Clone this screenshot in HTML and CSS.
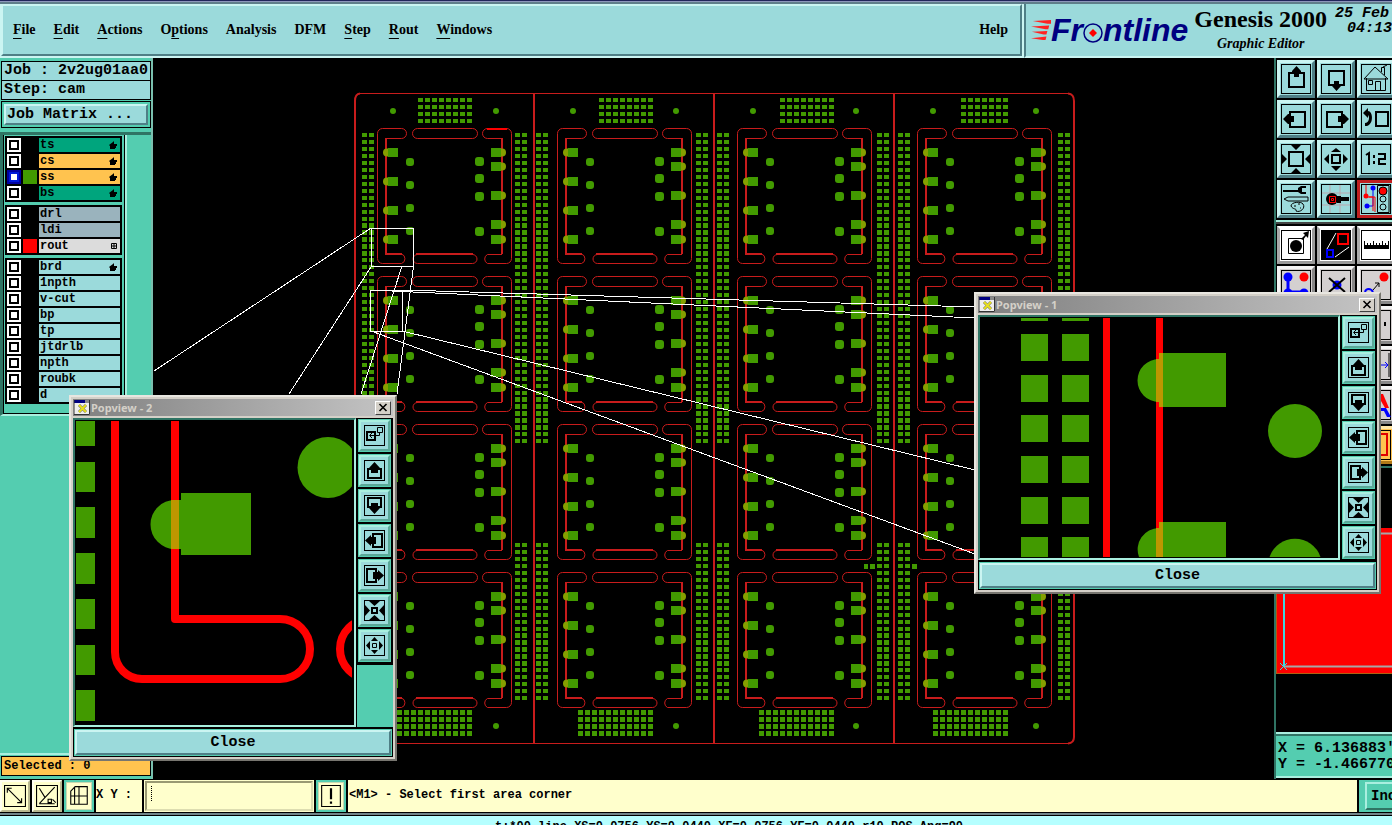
FILE: index.html
```html
<!DOCTYPE html>
<html lang="en">
<head>
<meta charset="utf-8">
<title>Genesis 2000 Graphic Editor</title>
<link rel="stylesheet" href="styles.css">
</head>
<body>
<svg class="defs" aria-hidden="true">
  <defs>
    <symbol id="hand" viewBox="0 0 8 8"><path d="M0 4 L4 1 L5 0 V3 H8 V5 H7 V7 H6 V8 H1 V5Z"/></symbol>
    <symbol id="grid4" viewBox="0 0 6 6"><path d="M0.500 .5H5.500V5.500H.5Z M3 0V6 M0 3H6" fill="none" stroke="#000"/></symbol>

    <!-- large toolbar icons -->
    <symbol id="t-up" viewBox="0 0 30 30"><path class="s2" d="M8 9H23V23H8Z"/><path d="M15.500 2L20 7V8H18V13H13V8H11V7Z"/></symbol>
    <symbol id="t-down" viewBox="0 0 30 30"><path class="s2" d="M8 7H23V21H8Z"/><path d="M15.500 27L20 22V21H18V17H13V21H11V22Z"/></symbol>
    <symbol id="t-left" viewBox="0 0 30 30"><path class="s2" d="M9 8H24V23H9Z"/><path d="M2 15L7 10H8V12H13V18H8V20H7Z"/></symbol>
    <symbol id="t-right" viewBox="0 0 30 30"><path class="s2" d="M6 8H21V23H6Z"/><path d="M28 15L23 10H22V12H17V18H22V20H23Z"/></symbol>
    <symbol id="t-home" viewBox="0 0 30 30"><path class="s1" d="M3 15L14 3L27 15M5.500 14V26.500H24.500V14M3 15H27M10 16.500H7.500V20.500H11.500V16.500H9M14.500 26V17.500H19.500V26M20.500 8V3.500H23.500V11M22 3L26 1"/></symbol>
    <symbol id="t-undo" viewBox="0 0 30 30"><path class="s2" d="M15 8H27V22H15Z"/><path d="M2 9L7 4V7C12 7 13 20 6 22H4V19C8 19 9 13 7 11V14Z"/></symbol>
    <symbol id="t-zin" viewBox="0 0 30 30"><path class="s2" d="M8 8H22V22H8Z"/><path d="M10 1H20L15 6ZM10 29H20L15 24ZM1 10V20L6 15ZM29 10V20L24 15Z"/></symbol>
    <symbol id="t-zout" viewBox="0 0 30 30"><path class="s2" d="M11 11H19V19H11Z"/><path d="M10 8H20L15 4ZM10 22H20L15 27ZM8 10V20L3 15ZM22 10V20L27 15Z"/></symbol>
    <symbol id="t-12" viewBox="0 0 30 30"><path class="s2" d="M5 11L8 9V21M13 11V14M13 17V20M17 10H24V15H18V20H25"/></symbol>
    <symbol id="t-tools" viewBox="0 0 30 30"><path d="M2 6H17V4L20 2H25V4H21V8H25V10H20L17 8H2Z"/><path class="s1" d="M3 15L7 13H27V17H7ZM10 22C10 18 20 17 22 20C25 24 19 29 15 27C16 24 12 26 10 22ZM13 22H15M17 20H19M19 24H20"/></symbol>
    <symbol id="t-pad" viewBox="0 0 30 30"><path d="M9 1V29M19 1V29M1 9H29M1 21H29" stroke="#b9a7ae"/><circle cx="11" cy="15" r="6"/><path d="M16 12H20V13H28V17H20V19H16Z"/><path d="M8.500 12.500H14.500V18.500H8.500ZM10.500 14.500H12.500V16.500H10.500Z" fill="none" stroke="red"/></symbol>
    <symbol id="t-net" viewBox="0 0 30 30"><path d="M12 4V22H6" fill="none" stroke="#00f"/><path d="M5 1V12M5 13H12V27M8 13H14V28" fill="none" stroke="red"/><circle cx="12" cy="4" r="2.500" fill="#00f"/><circle cx="6" cy="22" r="2.500" fill="#00f"/><circle cx="5" cy="12" r="2.500" fill="red"/><path class="s1" d="M16.500 1.500H28V28.500H16.500Z"/><circle cx="22" cy="7" r="4" fill="red" stroke="#000"/><circle class="s1" cx="22" cy="15" r="3"/><circle class="s1" cx="22" cy="23" r="3"/></symbol>
    <symbol id="t-sel" viewBox="0 0 30 30"><path class="s1" d="M7.500 8.500H22.500V23.500H7.500Z"/><circle cx="15" cy="16" r="6"/><path d="M20 9L24 5L22 3L28 1L27 8L25 6L22 10Z"/></symbol>
    <symbol id="t-poly" viewBox="0 0 30 30"><path d="M1 1H29V29H1Z"/><path d="M6 19L15 3M14 27L28 17" stroke="#fff"/><path d="M17 4H27V14H17Z" fill="none" stroke="red" stroke-width="2"/><path d="M6 20H12V27H6Z" fill="none" stroke="#00f" stroke-width="2"/></symbol>
    <symbol id="t-ruler" viewBox="0 0 30 30"><path d="M3 11H4V15H6V13H7V15H9V13H10V15H12V11H13V15H15V13H16V15H18V13H19V15H21V11H22V15H24V13H25V15H27V11H28V19H3Z"/></symbol>
    <symbol id="t-dots" viewBox="0 0 30 30"><path d="M7 7V22H24" stroke="#00f" stroke-width="3" fill="none"/><circle cx="7" cy="7" r="4.500" fill="#00f"/><circle cx="23" cy="7" r="4.500" fill="red"/><circle cx="7" cy="23" r="4.500" fill="#00f"/><circle cx="23" cy="23" r="4.500" fill="#00f"/></symbol>
    <symbol id="t-cross" viewBox="0 0 30 30"><circle cx="16" cy="15" r="4.500" fill="#00f"/><path class="s2" d="M8 8L24 22M24 8L8 22"/></symbol>
    <symbol id="t-move" viewBox="0 0 30 30"><circle cx="23" cy="7" r="4.500" fill="red"/><path class="s1" d="M12 20L18 13M14 13H18V17"/><path d="M4 22C5 18 10 18 12 22" stroke="#00f" stroke-width="2" fill="none"/></symbol>
    <symbol id="t-line" viewBox="0 0 30 30"><path class="s2" d="M24 12V16"/></symbol>
    <symbol id="t-arrow" viewBox="0 0 30 30"><path d="M16 15H27M24 12L27 15L24 18" stroke="#00f" fill="none"/><path class="s1" d="M28 3V27"/></symbol>
    <symbol id="t-text" viewBox="0 0 30 30"><path d="M16 4H22L28 18H24Z" fill="red"/><path d="M16 18H25L30 27H26L23 21H16Z" fill="#00f"/></symbol>
    <symbol id="t-rect" viewBox="0 0 30 30"><path d="M8 4H26V25H8Z" fill="none" stroke="#e00000" stroke-width="2"/></symbol>

    <!-- popview icons -->
    <symbol id="p-detach" viewBox="0 0 21 21"><path class="s2" d="M3 7H11V15H3Z"/><path class="s1" d="M13.500 2.500H18.500V7.500H13.500ZM15.500 8V10.500H6M8 8L5.500 10.500L8 13"/></symbol>
    <symbol id="p-up" viewBox="0 0 21 21"><path class="s2" d="M7 9H4V18H17V9H14"/><path d="M10.500 2L16 8H14V13H7V8H5Z"/></symbol>
    <symbol id="p-down" viewBox="0 0 21 21"><path class="s2" d="M7 12H4V3H17V12H14"/><path d="M10.500 19L16 13H14V8H7V13H5Z"/></symbol>
    <symbol id="p-left" viewBox="0 0 21 21"><path class="s2" d="M9 7V4H18V17H9V14"/><path d="M1 10.500L7 5V7H12V14H7V16Z"/></symbol>
    <symbol id="p-right" viewBox="0 0 21 21"><path class="s2" d="M12 7V4H3V17H12V14"/><path d="M20 10.500L14 5V7H9V14H14V16Z"/></symbol>
    <symbol id="p-in" viewBox="0 0 21 21"><path class="s2" d="M8 8H13V13H8Z"/><path d="M5 1H16L10.500 6ZM5 20H16L10.500 15ZM1 5V16L6 10.500ZM20 5V16L15 10.500Z"/></symbol>
    <symbol id="p-out" viewBox="0 0 21 21"><path class="s1" d="M8.500 8.500H12.500V12.500H8.500Z"/><path d="M7 6H14L10.500 2ZM7 15H14L10.500 19ZM6 6V15L2 10.500ZM15 6V15L19 10.500Z"/></symbol>
    <symbol id="win" viewBox="0 0 16 15"><path d="M0 0H16V15H0Z" fill="#eee"/><path d="M0 0H16V3H0Z" fill="#000080"/><path d="M11 0H16V3H11Z" fill="#888"/><path d="M0 0V14.500H15.500V0" fill="none" stroke="#333"/><path d="M5 5L12 12M12 5L5 12" stroke="#777" stroke-width="3"/><path d="M5 5L12 12M12 5L5 12" stroke="#e6df1c" stroke-width="2"/></symbol>
    <symbol id="x" viewBox="0 0 10 9"><path d="M1.500 1L8.500 8M8.500 1L1.500 8" stroke="#000" stroke-width="1.600"/></symbol>
  </defs>
</svg>

<div class="desktop">
  <header class="top">
    <nav class="menubar">
      <button><u>F</u>ile</button><button><u>E</u>dit</button><button><u>A</u>ctions</button><button>O<u>p</u>tions</button><button>Analysis</button><button>DFM</button><button><u>S</u>tep</button><button><u>R</u>out</button><button><u>W</u>indows</button>
      <button class="help">Help</button>
    </nav>
    <div class="brand">
      <div class="logo">
        <svg class="speed" viewBox="0 0 22 23"><g fill="#f22"><path d="M2 1L22 0V4L18 4Z"/><path d="M0 7L20 6L19 10L16 10Z"/><path d="M1 13L18 12L17 16L14 16Z"/><path d="M0 20L17 18L16 22L13 22Z"/></g></svg>
        <span>Fr</span><svg class="ring" viewBox="0 0 20 20"><circle cx="10" cy="10" r="9" fill="none" stroke="#000080" stroke-width="1.500"/><path d="M10 6L14 10L10 14L6 10Z" fill="red"/></svg><span>ntline</span>
      </div>
      <div class="product"><h1>Genesis 2000</h1><p>Graphic Editor</p></div>
      <time class="clock"><span>25 Feb</span><span>04:13</span></time>
    </div>
  </header>

  <main class="work">
    <aside class="side">
      <div class="job">
        <p>Job : 2v2ug01aa0</p>
        <p>Step: cam</p>
      </div>
      <div class="matrix"><button>Job Matrix ...</button></div>
      <div class="layers">
        <div class="layer-list">
          <div class="group">
            <label class="layer green"><input type="checkbox"><i></i><span>ts<svg><use href="#hand"/></svg></span></label>
            <label class="layer orange"><input type="checkbox"><i></i><span>cs<svg><use href="#hand"/></svg></span></label>
            <label class="layer orange active"><input type="checkbox"><i class="ink-green"></i><span>ss<svg><use href="#hand"/></svg></span></label>
            <label class="layer green"><input type="checkbox"><i></i><span>bs<svg><use href="#hand"/></svg></span></label>
          </div>
          <div class="group">
            <label class="layer slate"><input type="checkbox"><i></i><span>drl</span></label>
            <label class="layer slate"><input type="checkbox"><i></i><span>ldi</span></label>
            <label class="layer grey"><input type="checkbox"><i class="ink-red"></i><span>rout<svg class="small"><use href="#grid4"/></svg></span></label>
          </div>
          <div class="group">
            <label class="layer"><input type="checkbox"><i></i><span>brd<svg><use href="#hand"/></svg></span></label>
            <label class="layer"><input type="checkbox"><i></i><span>1npth</span></label>
            <label class="layer"><input type="checkbox"><i></i><span>v-cut</span></label>
            <label class="layer"><input type="checkbox"><i></i><span>bp</span></label>
            <label class="layer"><input type="checkbox"><i></i><span>tp</span></label>
            <label class="layer"><input type="checkbox"><i></i><span>jtdrlb</span></label>
            <label class="layer"><input type="checkbox"><i></i><span>npth</span></label>
            <label class="layer"><input type="checkbox"><i></i><span>roubk</span></label>
            <label class="layer"><input type="checkbox"><i></i><span>d</span></label>
          </div>
        </div>
      </div>
      <div class="selected"><p>Selected : 0</p></div>
    </aside>

    <section class="canvas">
      <svg viewBox="153 58 1121 721" preserveAspectRatio="xMidYMid slice">
        <defs>
          <g id="lp"><rect x="388" y="148" width="10" height="9" fill="#429a00"/><path d="M388 148.500H387A4 4 0 0 0 387 156.500H388Z" fill="#86a000"/></g>
          <g id="rp"><rect x="491" y="148" width="10" height="9" fill="#429a00"/><path d="M501 148.500H502A4 4 0 0 1 502 156.500H501Z" fill="#86a000"/></g>
          <g id="cell">
            <g fill="none" stroke="#c81c1c" stroke-width="1">
              <path d="M382.500 128.500H401.500A5 5 0 0 1 401.500 138.500H386M386 263.500H382.500A5 5 0 0 1 377.500 258.500V133.500A5 5 0 0 1 382.500 128.500M386 263.500H401.500A5 5 0 0 0 401.500 254"/>
              <path d="M417.500 128.500H472.500A5 5 0 0 1 472.500 138.500H417.500A5 5 0 0 1 417.500 128.500Z"/>
              <path d="M417.500 254.500A4.500 4.500 0 0 0 417.500 263.500H472.500A4.500 4.500 0 0 0 472.500 254.500"/>
              <path d="M502 138.500H487.500A5 5 0 0 1 487.500 128.500H506.500A5 5 0 0 1 511.500 133.500V258.500A5 5 0 0 1 506.500 263.500H487.500A5 5 0 0 1 487.500 254.500H502"/>
              <path d="M386 138V254H402M416 254H473M502 138V254" stroke-width="2"/>
            </g>
            <use href="#lp"/><use href="#lp" y="29"/><use href="#lp" y="58"/><use href="#lp" y="87"/>
            <use href="#rp"/><use href="#rp" y="14"/><use href="#rp" y="43"/><use href="#rp" y="72"/><use href="#rp" y="87"/>
            <g fill="#429a00">
              <rect x="406" y="158" width="8" height="8" rx="3"/><rect x="406" y="181" width="8" height="8" rx="3"/><rect x="406" y="204" width="8" height="8" rx="3"/><rect x="406" y="227" width="8" height="8" rx="3"/>
              <rect x="475" y="157" width="9" height="9" rx="3"/><rect x="475" y="174" width="9" height="9" rx="3"/><rect x="475" y="192" width="9" height="9" rx="3"/><rect x="475" y="227" width="9" height="9" rx="3"/>
            </g>
          </g>
          <g id="row"><use href="#cell"/><use href="#cell" x="180"/><use href="#cell" x="360"/><use href="#cell" x="540"/></g>
          <path id="strip" class="dash" stroke-width="5" stroke-dasharray="4.200 2.760" d="M.5 133V444M7.500 133V444M.5 543V701M7.500 543V701"/>
          <path id="block8" class="dash" stroke-width="4" stroke-dasharray="5 2" d="M0 100H54M0 107H54M0 114H54M0 121H54"/>
          <path id="block11" class="dash" stroke-width="5" stroke-dasharray="5 2" d="M0 712.500H75M0 719.500H75M0 726.500H75M0 733.500H75"/>
        </defs>
        <g fill="none" stroke="#c81c1c">
          <path d="M360 93.500H1069M360 743.500H1069"/>
          <path d="M360 93.500Q355 94 355 101V735Q355 743 361 743.500M1068 93.500Q1074 94 1074 101V737Q1074 743 1068 743.500M534 93V743M714 93V743M894 93V743" stroke-width="2"/>
        </g>
        <use href="#row"/><use href="#row" y="148"/><use href="#row" y="296"/><use href="#row" y="444"/>
        <path d="M487 129H507" stroke="red" stroke-width="2"/>
        <use href="#strip" x="364"/><use href="#strip" x="517"/><use href="#strip" x="538"/><use href="#strip" x="698"/><use href="#strip" x="719"/><use href="#strip" x="879"/><use href="#strip" x="900"/><use href="#strip" x="1060"/>
        <use href="#block8" x="418"/><use href="#block8" x="599"/><use href="#block8" x="780"/>
        <path class="dash" stroke-width="4" stroke-dasharray="5 2" d="M961 100H1008M961 107H1008M961 114H1008M961 121H1008"/>
        <use href="#block11" x="397"/><use href="#block11" x="578"/><use href="#block11" x="759"/><use href="#block11" x="933"/>
        <g fill="#429a00">
          <path d="M864 564H868V569H864ZM870 564H875V569H870ZM912 564H917V569H912Z"/>
          <circle cx="393" cy="111" r="3"/><circle cx="496" cy="111" r="3"/><circle cx="573" cy="111" r="3"/><circle cx="676" cy="111" r="3"/><circle cx="753" cy="111" r="3"/><circle cx="856" cy="111" r="3"/><circle cx="933" cy="111" r="3"/><circle cx="1036" cy="111" r="3"/>
          <circle cx="496" cy="726" r="3"/><circle cx="676" cy="726" r="3"/><circle cx="856" cy="726" r="3"/><circle cx="1036" cy="726" r="3"/>
        </g>
        <path class="rays" d="M371.500 228.500H413.500V266.500H371.500ZM370.500 290.500H402.500V331.500H370.500ZM371 228L154 371M371 267L289 394M402 266L361 394M413.500 266L397 394M370 290L975 318M402 290L975 307M402 331L975 470M371 331L975 554"/>
      </svg>
    </section>

    <aside class="tools">
      <div class="tool-grid nav">
        <button aria-label="Pan up"><svg><use href="#t-up"/></svg></button><button aria-label="Pan down"><svg><use href="#t-down"/></svg></button><button aria-label="Home"><svg><use href="#t-home"/></svg></button>
        <button aria-label="Pan left"><svg><use href="#t-left"/></svg></button><button aria-label="Pan right"><svg><use href="#t-right"/></svg></button><button aria-label="Previous view"><svg><use href="#t-undo"/></svg></button>
        <button aria-label="Zoom in"><svg><use href="#t-zin"/></svg></button><button aria-label="Zoom out"><svg><use href="#t-zout"/></svg></button><button aria-label="Scale"><svg><use href="#t-12"/></svg></button>
        <button aria-label="Options"><svg><use href="#t-tools"/></svg></button><button aria-label="Snap"><svg><use href="#t-pad"/></svg></button><button class="on" aria-label="Net control"><svg><use href="#t-net"/></svg></button>
      </div>
      <div class="tool-grid edit">
        <button class="white" aria-label="Select feature"><svg><use href="#t-sel"/></svg></button><button class="white" aria-label="Popview"><svg><use href="#t-poly"/></svg></button><button class="white" aria-label="Measure"><svg><use href="#t-ruler"/></svg></button>
        <button aria-label="Chain"><svg><use href="#t-dots"/></svg></button><button aria-label="Delete"><svg><use href="#t-cross"/></svg></button><button aria-label="Move"><svg><use href="#t-move"/></svg></button>
        <button aria-label="Add"></button><button aria-label="Copy"></button><button aria-label="Line"><svg><use href="#t-line"/></svg></button>
        <button aria-label="Mirror"></button><button aria-label="Rotate"></button><button aria-label="Stretch"><svg><use href="#t-arrow"/></svg></button>
        <button aria-label="Arc"></button><button aria-label="Pad"></button><button aria-label="Text"><svg><use href="#t-text"/></svg></button>
        <button aria-label="Surface"></button><button aria-label="Fill"></button><button class="amber" aria-label="Rectangle"><svg><use href="#t-rect"/></svg></button>
      </div>
      <div class="overview">
        <svg viewBox="0 0 120 146" preserveAspectRatio="xMinYMin slice"><path d="M0 0H120V146H0Z" fill="red"/><path d="M.5 0V145.500H120" fill="none" stroke="#b06010"/><path d="M8 5.500H120M8 138.500H120" stroke="#a8a8a8" stroke-width="2"/><path d="M8 5V138" stroke="#40d8e0" stroke-width="2"/><path d="M4 135L11 142M11 135L4 142" stroke="#20e8f0"/></svg>
      </div>
      <div class="coords"><p>X = 6.136883'</p><p>Y = -1.466770</p></div>
    </aside>
  </main>

  <form class="command">
    <button type="button" aria-label="Absolute"><svg viewBox="0 0 20 20"><path class="s1" d="M.5 .5H19.500V19.500H.5ZM3 3L16 16M3 7V3H7M16 12V16H12"/></svg></button>
    <button type="button" aria-label="Angle"><svg viewBox="0 0 20 20"><path class="s1" d="M.5 .5H19.500V19.500H.5ZM3 17L17 2M3 3L8 11M3 17H17M11 13H14V16H11ZM15 13L18 16"/></svg></button>
    <button type="button" class="framed" aria-label="Grid"><svg viewBox="0 0 20 20"><path class="s1" d="M2.500 5.500L6.500 1.500H17.500V17.500H2.500ZM10 2V18M2 10H18M6 2V18"/></svg></button>
    <label for="xy">X Y :</label>
    <div class="xy"><input id="xy" type="text"></div>
    <button type="button" class="framed" aria-label="Alert"><svg viewBox="0 0 20 20"><path class="s1" d="M1.500 .5H18.500V19.500H1.500Z"/><path d="M9 3H11V13H9ZM9 15H11V17H9Z"/></svg></button>
    <output>&lt;M1&gt; - Select first area corner</output>
    <div class="units"><button type="button">Inc</button></div>
  </form>
  <footer class="status">t:*00 line XS=0.0756 YS=0.0440 XE=0.0756 YE=0.0440 r10 POS Ang=90</footer>

  <section class="popview two" aria-label="Popview - 2">
    <header><svg class="ico"><use href="#win"/></svg><h2>Popview - 2</h2><button aria-label="Close window"><svg><use href="#x"/></svg></button></header>
    <div class="view">
      <div class="picture">
        <svg viewBox="75 420 279 305" preserveAspectRatio="xMinYMin slice">
          <g fill="#429a00"><path d="M76 421H95V446H76ZM76 462H95V492H76ZM76 507H95V538H76ZM76 553H95V584H76ZM76 599H95V629H76ZM76 645H95V675H76ZM76 690H95V721H76Z"/><circle cx="328" cy="467.500" r="30.500"/></g>
          <path d="M115 421V652A27 27 0 0 0 142 679H280A30 30 0 0 0 280 619H175V421" fill="none" stroke="red" stroke-width="8" stroke-linejoin="round"/>
          <circle cx="370" cy="649" r="30" fill="none" stroke="red" stroke-width="8"/>
          <path d="M181 493H251V555H181V549H175A24.500 24.500 0 0 1 175 500H181Z" fill="#429a00"/>
          <path d="M171 500H179V549H171Z" fill="#bd9700"/>
          <path d="M352 420H354V725H352Z"/>
        </svg>
      </div>
      <div class="ptools"><button aria-label="Dock"><svg><use href="#p-detach"/></svg></button><button aria-label="Up"><svg><use href="#p-up"/></svg></button><button aria-label="Down"><svg><use href="#p-down"/></svg></button><button aria-label="Left"><svg><use href="#p-left"/></svg></button><button aria-label="Right"><svg><use href="#p-right"/></svg></button><button aria-label="Zoom in"><svg><use href="#p-in"/></svg></button><button aria-label="Zoom out"><svg><use href="#p-out"/></svg></button></div>
    </div>
    <div class="close"><button>Close</button></div>
  </section>

  <section class="popview one" aria-label="Popview - 1">
    <header><svg class="ico"><use href="#win"/></svg><h2>Popview - 1</h2><button aria-label="Close window"><svg><use href="#x"/></svg></button></header>
    <div class="view">
      <div class="picture">
        <svg viewBox="980 317 358 241" preserveAspectRatio="xMinYMin slice">
          <g fill="#429a00">
            <g id="pcol"><path d="M1021 318H1048V321H1021ZM1021 334H1048V361H1021ZM1021 375H1048V402H1021ZM1021 415H1048V442H1021ZM1021 456H1048V483H1021ZM1021 497H1048V524H1021ZM1021 537H1048V557H1021Z"/></g>
            <use href="#pcol" x="41"/>
            <circle cx="1295" cy="431" r="27"/><path d="M1269.500 557A27 27 0 0 1 1320.500 557Z"/>
          </g>
          <path d="M1106.500 318V557M1159.500 318V557" stroke="red" stroke-width="7"/>
          <path d="M1159 353H1226V407H1159V402A21.500 21.500 0 0 1 1159 359ZM1159 522H1226V557H1139A21.500 21.500 0 0 1 1159 528Z" fill="#429a00"/>
          <path d="M1156 359H1159V353H1163V407H1159V402H1156ZM1156 528H1159V522H1163V557H1156Z" fill="#bd9700"/>
        </svg>
      </div>
      <div class="ptools"><button aria-label="Dock"><svg><use href="#p-detach"/></svg></button><button aria-label="Up"><svg><use href="#p-up"/></svg></button><button aria-label="Down"><svg><use href="#p-down"/></svg></button><button aria-label="Left"><svg><use href="#p-left"/></svg></button><button aria-label="Right"><svg><use href="#p-right"/></svg></button><button aria-label="Zoom in"><svg><use href="#p-in"/></svg></button><button aria-label="Zoom out"><svg><use href="#p-out"/></svg></button></div>
    </div>
    <div class="close"><button>Close</button></div>
  </section>
</div>
</body>
</html>
```

FILE: styles.css
```css
:root {
  --aqua: #9bdadb;
  --aqua-light: #cbf5f2;
  --aqua-dark: #4f7f86;
  --green: #54cdb0;
  --green-light: #a9efdf;
  --green-dark: #2f7464;
  --cream: #ffffcc;
  --amber: #ffc34f;
}
* { box-sizing: border-box; }
body { margin: 0; background: #000; color: #000; overflow: hidden; font: bold 15px/18px "Liberation Mono", monospace; }
h1, h2, p { margin: 0; font: inherit; }
button { margin: 0; padding: 0; border: 0; background: none; font: inherit; color: inherit; border-radius: 0; }
svg { display: block; }
.defs { position: absolute; width: 0; height: 0; }
.s1 { fill: none; stroke: #000; stroke-width: 1; }
.s2 { fill: none; stroke: #000; stroke-width: 2; }

.desktop { position: relative; height: 100vh; display: flex; flex-direction: column; overflow: hidden; }

/* header */
.top { display: flex; flex: none; height: 58px; padding-top: 4px; background: linear-gradient(#21255b 1px, #8c95ba 1px, #8c95ba 2px, #5f7e8a 2px, #5f7e8a 4px, var(--aqua-light) 4px); }
.menubar { flex: 1; display: flex; align-items: center; gap: 18px; margin: 0 2px 2px 1px; padding: 0 12px 0 10px; background: var(--aqua); border: 2px solid; border-color: var(--aqua-light) var(--aqua-dark) var(--aqua-dark) var(--aqua-light); font: bold 14px/20px "Liberation Serif", serif; }
.menubar u { text-underline-offset: 4px; text-decoration-thickness: 1px; text-decoration-skip-ink: none; }
.help { margin-left: auto; }
.brand { flex: none; width: 368px; display: flex; overflow: hidden; background: var(--aqua); border-left: 2px solid var(--aqua-dark); border-bottom: 2px solid var(--aqua-light); }
.logo { display: flex; align-items: center; padding: 0 6px 10px 5px; color: #000080; font: italic bold 32px/40px "Liberation Sans", sans-serif; }
.logo { padding-bottom: 0; }
.speed { width: 20px; height: 23px; }
.ring { width: 20px; height: 20px; margin-top: 5px; }
.product { flex: none; text-align: center; }
.product h1 { font: bold 24px/30px "Liberation Serif", serif; }
.product p { font: italic bold 14px/20px "Liberation Serif", serif; }
.clock { flex: none; padding: 2px 0 0 8px; font-style: italic; font-size: 15px; line-height: 15px; }
.clock span { display: block; white-space: nowrap; }
.clock span + span { padding-left: 12px; }

/* main */
.work { flex: 1; display: flex; min-height: 0; }
.side { flex: none; width: 153px; display: flex; flex-direction: column; background: var(--green); padding-top: 2px; border-right: 2px solid #7abfae; }
.job { padding: 1px 0 0 1px; }
.job p { height: 20px; border: 1px solid #000; background: var(--aqua); padding-left: 2px; white-space: nowrap; }
.job p + p { margin-top: -1px; }
.matrix { margin: 1px 0 4px 1px; border: 1px solid #000; padding: 2px; background: var(--green); }
.matrix button { display: block; width: 100%; height: 21px; border: 2px solid; border-color: var(--aqua-light) var(--aqua-dark) var(--aqua-dark) var(--aqua-light); background: var(--aqua); text-align: left; padding-left: 1px; }
.layers { flex: 1; border-top: 3px solid var(--green-dark); border-bottom: 2px solid var(--green-light); }
.layer-list { width: 127px; padding: 1px 3px 10px 1px; border-left: 3px solid var(--green-dark); border-right: 2px solid var(--green-light); border-bottom: 2px solid var(--green-light); display: flex; flex-direction: column; gap: 3px; box-shadow: inset 1px 0 #000, inset -1px 0 #000, inset 0 -1px #000; }
.group { background: #000; padding: 2px; display: flex; flex-direction: column; gap: 2px; margin-left: 1px; }
.layer { height: 14px; display: flex; gap: 2px; font-size: 12px; line-height: 14px; --bg: var(--aqua); }
.layer input { appearance: none; margin: 0; width: 14px; height: 14px; background: #fff; border: 2px solid #fff; box-shadow: inset 0 0 0 2px #000; }
.layer.active input { border-color: #0000a0; box-shadow: inset 0 0 0 2px #0018d8; }
.layer i { width: 14px; }
.layer span { flex: 1; display: flex; justify-content: space-between; align-items: center; padding: 0 3px 0 1px; background: var(--bg); }
.layer svg { width: 8px; height: 8px; }
.layer svg.small { width: 6px; height: 6px; }
.layer.green { --bg: #00a57d; }
.layer.orange { --bg: var(--amber); }
.layer.slate { --bg: #9ab3bd; }
.layer.grey { --bg: #dcdcdc; }
.ink-green { background: #429a00; }
.ink-red { background: #f00; }
.selected { padding: 1px 0 3px 1px; }
.selected p { height: 20px; border: 1px solid #000; background: var(--amber); padding-left: 2px; font-size: 12px; line-height: 18px; }

.canvas { flex: 1; min-width: 0; overflow: hidden; }
.canvas svg { width: 100%; height: 100%; }
.dash { fill: none; stroke: #429a00; shape-rendering: crispEdges; }
.rays { fill: none; stroke: #fff; stroke-width: 1; shape-rendering: crispEdges; }

.tools { flex: none; width: 118px; display: flex; flex-direction: column; overflow: hidden; border-left: 2px solid var(--green-dark); }
.tool-grid { flex: none; display: grid; grid-template-columns: repeat(3, 38px); gap: 2px; padding: 2px 1px; }
.tool-grid button { height: 38px; padding: 1px; background: var(--aqua); border: 3px solid; border-color: var(--aqua-light) var(--aqua-dark) var(--aqua-dark) var(--aqua-light); }
.tool-grid svg { width: 30px; height: 30px; box-shadow: inset 0 0 0 1px #000; }
.nav { border-bottom: 2px solid var(--green-light); }
.nav .on { border-color: #c02020; }
.edit { border-top: 2px solid #444; border-bottom: 2px solid var(--green-dark); }
.edit button { background: #d4d0d0; border-color: #f4f4f4 #888 #888 #f4f4f4; }
.edit .white { background: #fff; border-color: #fff #999 #999 #aaa; }
.edit .amber { background: var(--amber); border-color: #ffe7a8 #b07818 #b07818 #ffe7a8; }
.overview { flex: 1; min-height: 0; padding-top: 60px; }
.overview svg { width: 120px; height: 146px; }
.coords { flex: none; height: 46px; padding: 7px 0 0 2px; background: var(--green); border-top: 2px solid var(--green-light); border-bottom: 2px solid var(--green-light); box-shadow: inset 0 2px var(--green-dark); line-height: 16px; white-space: nowrap; overflow: hidden; margin-bottom: 1px; }

/* command line */
.command { flex: none; height: 34px; display: flex; gap: 2px; padding: 1px 0; background: #000; font-size: 12px; line-height: 30px; }
.command > button { width: 30px; padding: 2px; border: 2px solid; border-color: #fffff0 #b8b890 #b8b890 #fffff0; background: var(--cream); }
.command > button svg { width: 22px; height: 22px; }
.command .framed { border: 2px solid var(--green); box-shadow: inset 0 0 0 1px #c8d8b0; }
.command label { width: 46px; background: var(--cream); white-space: nowrap; }
.xy { width: 170px; background: var(--cream); padding: 1px; }
.xy input { display: block; width: 100%; height: 100%; border: 2px solid; border-color: #999973 #ddddb0 #ddddb0 #999973; background: repeating-linear-gradient(#000 0 1px, var(--cream) 1px 2px) 4px 3px / 1px 15px no-repeat var(--cream); font: inherit; padding: 0 4px; outline: 0; }
.command output { flex: 1; background: var(--cream); padding-left: 1px; white-space: nowrap; overflow: hidden; }
.units { width: 33px; overflow: hidden; background: var(--green); padding: 2px 0 2px 6px; }
.units button { width: 60px; height: 28px; text-align: left; padding-left: 4px; border: 2px solid; border-color: var(--green-light) var(--green-dark) var(--green-dark) var(--green-light); font-size: 14px; line-height: 20px; }
.status { flex: none; height: 12px; border-top: 2px solid #70868a; background: #b5ffff; box-shadow: inset 0 1px #000; padding-top: 5px; padding-left: 66px; text-align: center; font-size: 12px; line-height: 14px; overflow: hidden; white-space: nowrap; }

/* floating windows */
.popview { position: absolute; display: flex; flex-direction: column; background: #000; border: 2px solid; border-color: #e8e6e0 #77756f #77756f #e8e6e0; box-shadow: inset 0 0 0 2px #d4d0c8; padding: 2px; }
.popview.two { left: 69px; top: 395px; width: 328px; height: 366px; }
.popview.one { left: 974px; top: 292px; width: 407px; height: 302px; }
.popview > header { flex: none; height: 19px; display: flex; align-items: center; background: linear-gradient(90deg, #808080, #c4c4c4); border-bottom: 2px solid #d4d0c8; padding: 0 2px 0 1px; }
.popview .ico { width: 16px; height: 15px; }
.popview h2 { flex: 1; padding-left: 1px; color: #d4d0c8; font: bold 11px/16px "Noto Sans", sans-serif; }
.popview > header button { width: 16px; height: 14px; padding: 1px 2px; background: #d4d0c8; border: 1px solid; border-color: #fff #404040 #404040 #fff; }
.popview > header button svg { width: 10px; height: 9px; }
.view { flex: 1; min-height: 0; display: flex; gap: 1px; }
.picture { flex: 1; min-width: 0; border: 2px solid; border-color: var(--green-dark) var(--green-light) var(--green-light) var(--green-dark); }
.picture svg { width: 100%; height: 100%; }
.ptools { flex: none; width: 36px; display: flex; flex-direction: column; gap: 2px; padding: 1px; background: linear-gradient(#000 247px, var(--green) 247px); }
.ptools button { flex: none; width: 33px; height: 33px; padding: 3px; background: var(--aqua); border: 3px solid; border-color: var(--green-light) #5aa898 #5aa898 var(--green-light); outline: 1px solid var(--green); outline-offset: -1px; }
.ptools svg { width: 21px; height: 21px; box-shadow: inset 0 0 0 1px #000; }
.close { flex: none; height: 29px; margin-top: 1px; padding: 1px; border: 1px solid #000; background: var(--green); }
.close button { display: block; width: 100%; height: 25px; background: var(--aqua); border: 2px solid; border-color: var(--aqua-light) var(--aqua-dark) var(--aqua-dark) var(--aqua-light); }
```
